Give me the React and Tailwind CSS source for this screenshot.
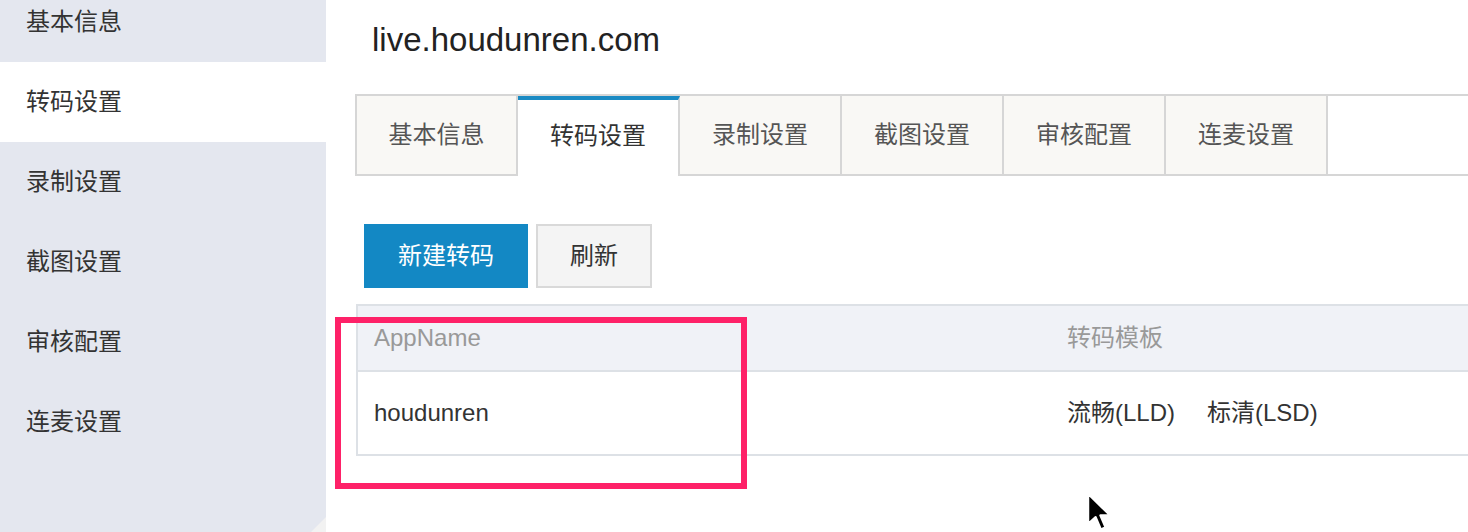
const font = { fontFamily: '"Liberation Sans", "Noto Sans CJK SC", sans-serif' };

const sideItems = ['基本信息', '转码设置', '录制设置', '截图设置', '审核配置', '连麦设置'];
const tabs = ['基本信息', '转码设置', '录制设置', '截图设置', '审核配置', '连麦设置'];

function Cursor() {
  return (
    <svg width="27" height="40" viewBox="0 0 13 19.5" className="absolute left-[1086px] top-[492px]">
      <path
        d="M1 1 L1 15.5 L4.6 12.2 L7.2 18.2 L9.4 17.2 L6.9 11.4 L11.6 11.4 Z"
        fill="#000"
        stroke="#fff"
        strokeWidth="1"
        strokeLinejoin="round"
      />
    </svg>
  );
}

export default function App() {
  return (
    <div className="relative flex h-[532px] w-[1468px] overflow-hidden bg-white" style={font}>
      <aside className="relative w-[326px] shrink-0 bg-[#e4e7ef]">
        <div className="-mt-[18px] flex flex-col">
          {sideItems.map((name, i) => (
            <div
              key={name}
              className={`flex h-[80px] items-center pl-[26px] text-[24px] text-[#333] ${
                i === 1 ? 'bg-white' : ''
              }`}
            >
              {name}
            </div>
          ))}
        </div>
        <div className="absolute bottom-0 right-0 h-[15px] w-[15px] bg-[#f2f2f2] [clip-path:polygon(100%_0,100%_100%,0_100%)]" />
      </aside>

      <main className="flex-1 pl-[29px] pt-[20px]">
        <h1 className="h-[40px] pl-[17px] text-[33px] leading-[40px] text-[#222]">live.houdunren.com</h1>

        <div className="mt-[34px] flex w-[1140px] border-t-2 border-[#d6d6d6]">
          {tabs.map((t, i) =>
            i === 1 ? (
              <div
                key={t}
                className="flex h-[80px] w-[162px] items-center justify-center border-r-2 border-t-4 border-r-[#d6d6d6] border-t-[#1a8ac3] bg-white pb-[4px] text-[24px] text-[#333]"
              >
                {t}
              </div>
            ) : (
              <div
                key={t}
                className={`flex h-[80px] items-center justify-center border-b-2 border-r-2 border-[#d6d6d6] bg-[#f9f8f5] text-[24px] text-[#555] ${
                  i === 0 ? 'w-[163px] border-l-2' : 'w-[162px]'
                }`}
              >
                {t}
              </div>
            )
          )}
          <div className="flex-1 border-b-2 border-[#d6d6d6]" />
        </div>

        <div className="mt-[48px] flex gap-[8px] pl-[9px]">
          <button className="h-[64px] w-[164px] bg-[#1388c4] text-[24px] text-white">新建转码</button>
          <button className="h-[64px] w-[116px] border-2 border-[#d9d9d9] bg-[#f4f4f4] text-[24px] text-[#333]">
            刷新
          </button>
        </div>

        <div className="relative ml-[1px] mt-[16px] w-[1140px] border-2 border-[#dde1e6]">
          <div className="flex h-[66px] items-center border-b-2 border-[#dde1e6] bg-[#f0f2f7] text-[24px] text-[#999]">
            <div className="w-[693px] pl-[16px]">AppName</div>
            <div className="pl-[16px]">转码模板</div>
          </div>
          <div className="flex h-[82px] items-center text-[24px] text-[#333]">
            <div className="w-[693px] pl-[16px]">houdunren</div>
            <div className="flex gap-[32px] pl-[16px]">
              <span>流畅(LLD)</span>
              <span>标清(LSD)</span>
            </div>
          </div>
          <div className="absolute -left-[23px] top-[11px] h-[172px] w-[412px] border-[6px] border-[#fe2168]" />
        </div>
      </main>

      <Cursor />
    </div>
  );
}
